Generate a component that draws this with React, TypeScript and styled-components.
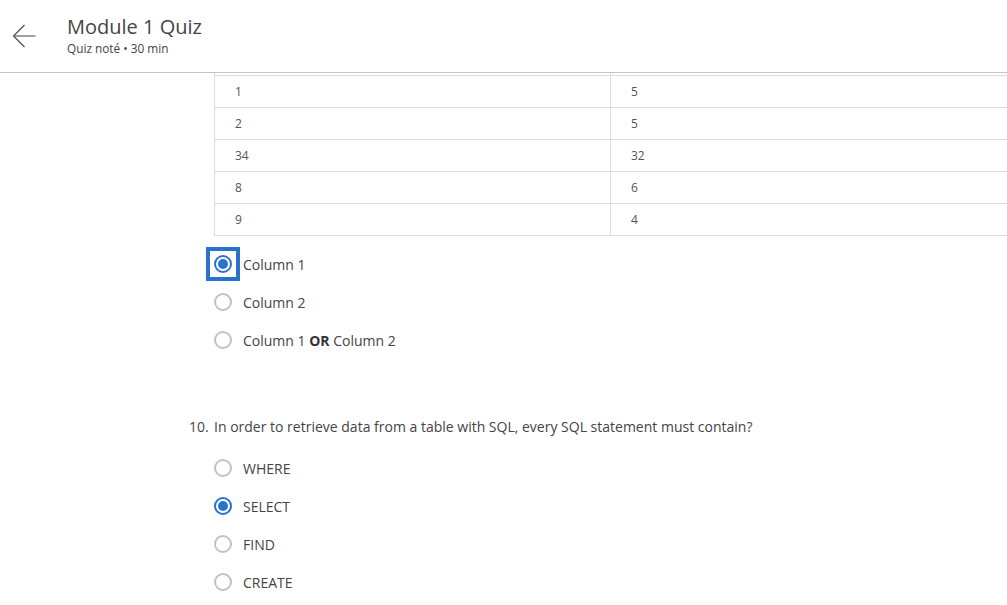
import React from "react";
import styled, { createGlobalStyle } from "styled-components";

const Global = createGlobalStyle`
  html, body { margin: 0; padding: 0; background: #fff; }
  body { font-family: "Open Sans", "Noto Sans", Arial, sans-serif; color: #333; overflow: hidden; }
`;

const Page = styled.div`
  width: 1007px;
  height: 605px;
  overflow: hidden;
  display: flex;
  flex-direction: column;
`;

const Header = styled.header`
  height: 72px;
  flex: none;
  border-bottom: 1px solid #c4c4c4;
  display: flex;
  align-items: flex-start;
  box-sizing: content-box;
`;

const BackButton = styled.button`
  border: 0;
  background: none;
  padding: 0;
  margin: 24px 0 0 12px;
  width: 26px;
  height: 24px;
  cursor: pointer;
  display: flex;
`;

const TitleBlock = styled.div`
  margin: 14px 0 0 29px;
  display: flex;
  flex-direction: column;
`;

const Title = styled.h1`
  margin: 0;
  font-size: 20px;
  line-height: 26px;
  font-weight: 400;
  color: #444;
`;

const Subtitle = styled.div`
  font-size: 11.8px;
  line-height: 14px;
  color: #444;
  margin-top: 1px;
`;

const Content = styled.main`
  flex: 1;
  overflow: hidden;
`;

const Table = styled.div`
  margin-left: 214px;
  width: 860px;
  border-left: 1px solid #dcdcdc;
  display: flex;
  flex-direction: column;
`;

const Row = styled.div<{ $clip?: boolean }>`
  display: grid;
  grid-template-columns: 396px 1fr;
  height: ${(p) => (p.$clip ? "2px" : "31px")};
  border-bottom: 1px solid #dcdcdc;
`;

const Cell = styled.div<{ $first?: boolean }>`
  display: flex;
  align-items: center;
  padding-left: 20px;
  font-size: 12px;
  color: #555;
  overflow: hidden;
  border-right: ${(p) => (p.$first ? "1px solid #dcdcdc" : "none")};
`;

const Options = styled.div<{ $top: number }>`
  margin-top: ${(p) => p.$top}px;
  margin-left: 214px;
  display: flex;
  flex-direction: column;
`;

const Option = styled.label`
  height: 38px;
  display: flex;
  align-items: center;
  gap: 11px;
  font-size: 14px;
  color: #444;
  cursor: pointer;
  b { font-weight: 700; color: #333; }
`;

const RadioFrame = styled.span<{ $focus?: boolean }>`
  display: flex;
  flex: none;
  outline: ${(p) => (p.$focus ? "4px solid #2a73cc" : "none")};
  outline-offset: 4px;
`;

const Radio = styled.span<{ $checked?: boolean }>`
  width: 18px;
  height: 18px;
  box-sizing: border-box;
  border-radius: 50%;
  border: 2px solid ${(p) => (p.$checked ? "#2a73cc" : "#c2c2c2")};
  display: flex;
  align-items: center;
  justify-content: center;
  &::after {
    content: "";
    width: 10px;
    height: 10px;
    border-radius: 50%;
    background: ${(p) => (p.$checked ? "#2a73cc" : "transparent")};
  }
`;

const Question = styled.div`
  margin-top: 59px;
  margin-left: 189px;
  display: flex;
  font-size: 14px;
  line-height: 18px;
  color: #444;
`;

const Num = styled.span`
  width: 25px;
  flex: none;
`;

const rows = [
  ["1", "5"],
  ["2", "5"],
  ["34", "32"],
  ["8", "6"],
  ["9", "4"],
];

export default function App() {
  return (
    <Page>
      <Global />
      <Header>
        <BackButton aria-label="Back">
          <svg width="26" height="24" viewBox="0 0 26 24" fill="none">
            <path d="M1.5 12 H23.5" stroke="#777" strokeWidth="1.4" />
            <path d="M12.5 1 L1.5 12 L12.5 23" stroke="#555" strokeWidth="1.3" />
          </svg>
        </BackButton>
        <TitleBlock>
          <Title>Module 1 Quiz</Title>
          <Subtitle>Quiz noté • 30 min</Subtitle>
        </TitleBlock>
      </Header>
      <Content>
        <Table>
          <Row $clip>
            <Cell $first />
            <Cell />
          </Row>
          {rows.map((r, i) => (
            <Row key={i}>
              <Cell $first>{r[0]}</Cell>
              <Cell>{r[1]}</Cell>
            </Row>
          ))}
        </Table>
        <Options $top={9}>
          <Option>
            <RadioFrame $focus>
              <Radio $checked />
            </RadioFrame>
            Column 1
          </Option>
          <Option>
            <RadioFrame>
              <Radio />
            </RadioFrame>
            Column 2
          </Option>
          <Option>
            <RadioFrame>
              <Radio />
            </RadioFrame>
            <span>
              Column 1 <b>OR</b> Column 2
            </span>
          </Option>
        </Options>
        <Question>
          <Num>10.</Num>
          <span>In order to retrieve data from a table with SQL, every SQL statement must contain?</span>
        </Question>
        <Options $top={13}>
          <Option>
            <RadioFrame>
              <Radio />
            </RadioFrame>
            WHERE
          </Option>
          <Option>
            <RadioFrame>
              <Radio $checked />
            </RadioFrame>
            SELECT
          </Option>
          <Option>
            <RadioFrame>
              <Radio />
            </RadioFrame>
            FIND
          </Option>
          <Option>
            <RadioFrame>
              <Radio />
            </RadioFrame>
            CREATE
          </Option>
        </Options>
      </Content>
    </Page>
  );
}
